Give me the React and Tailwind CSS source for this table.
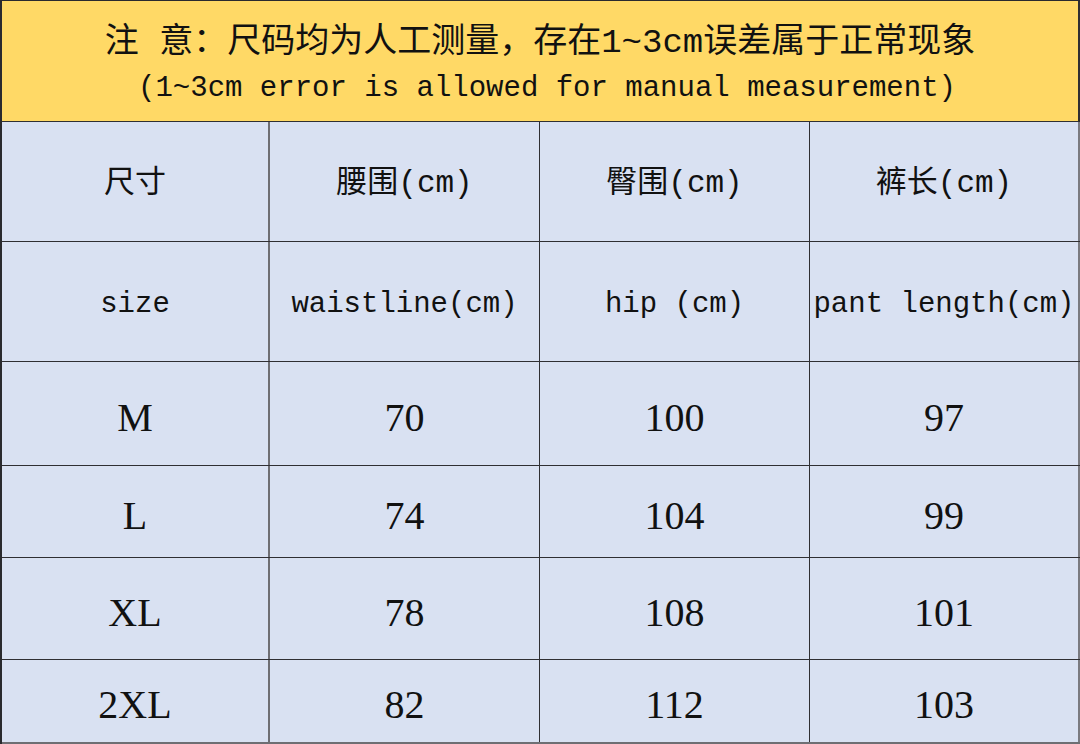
import React from "react";

const headRows = [
  { h: "h-[120px]", size: "text-[31px] pt-[6px]", cells: ["尺寸", "腰围(cm)", "臀围(cm)", "裤长(cm)"] },
  { h: "h-[120px]", size: "text-[29px] pt-[6px]", cells: ["size", "waistline(cm)", "hip (cm)", "pant length(cm)"] },
];

const dataRows = [
  { h: "h-[104px]", cells: ["M", "70", "100", "97"] },
  { h: "h-[92px]", cells: ["L", "74", "104", "99"] },
  { h: "h-[102px]", cells: ["XL", "78", "108", "101"] },
  { h: "h-[84px]", cells: ["2XL", "82", "112", "103"] },
];

// column widths + border colours follow the screenshot
const colClass = [
  "w-[268px] border-r-2 border-[#6e6e73]",
  "w-[270px] border-r border-[#2f2f33]",
  "w-[270px] border-r border-[#2f2f33]",
  "flex-1 border-r-2 border-[#7a7a80]",
];

const monoFont = "font-['Liberation_Mono','Noto_Sans_CJK_SC',monospace]";
const serifFont = "font-['Liberation_Serif','Noto_Sans_CJK_SC',serif]";

function Row({ h, cells, textClass, last }) {
  return (
    <div className={`flex ${h} ${last ? "border-b-2 border-[#6e6e73]" : "border-b border-[#2f2f33]"}`}>
      {cells.map((c, i) => (
        <div
          key={i}
          className={`${colClass[i]} flex items-center justify-center whitespace-pre text-[#111] ${textClass}`}
        >
          {c}
        </div>
      ))}
    </div>
  );
}

export default function App() {
  return (
    <div className="w-[1080px] h-[744px] bg-white overflow-hidden">
      <div className="w-[1080px] h-[744px] border-l-2 border-t border-[#2a2a2e] bg-[#d9e1f2] flex flex-col">
        {/* notice banner */}
        <div className="h-[121px] bg-[#ffd966] border-b border-r-2 border-[#2f2f33] flex flex-col items-center justify-center text-[#111] pt-[10px]">
          <div className="font-['Liberation_Mono','Noto_Sans_CJK_SC',monospace] text-[34px] leading-[40px]">
            注 意：尺码均为人工测量，存在1~3cm误差属于正常现象
          </div>
          <div className="font-['Liberation_Mono','Noto_Sans_CJK_SC',monospace] text-[29px] leading-[40px] mt-[6px] pl-[14px]">
            (1~3cm error is allowed for manual measurement)
          </div>
        </div>

        {headRows.map((r, i) => (
          <Row key={i} h={r.h} cells={r.cells} textClass={`${monoFont} ${r.size}`} />
        ))}

        {dataRows.map((r, i) => (
          <Row
            key={i}
            h={r.h}
            cells={r.cells}
            textClass={`${serifFont} text-[40px] pt-[8px] [&>span]:inline-block`}
            last={i === dataRows.length - 1}
          />
        ))}
      </div>
    </div>
  );
}
